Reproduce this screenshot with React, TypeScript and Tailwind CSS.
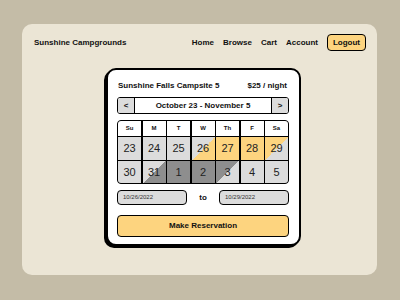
import React from "react";

type Cell = { n: string; cls: string };

const row1: Cell[] = [
  { n: "23", cls: "bg-[#dcdcdc]" },
  { n: "24", cls: "bg-[#dcdcdc]" },
  { n: "25", cls: "bg-[#dcdcdc]" },
  { n: "26", cls: "bg-[linear-gradient(to_bottom_right,#dcdcdc_50%,#fdd47f_50%)]" },
  { n: "27", cls: "bg-[#fdd47f]" },
  { n: "28", cls: "bg-[#fdd47f]" },
  { n: "29", cls: "bg-[linear-gradient(to_bottom_right,#fdd47f_50%,#dcdcdc_50%)]" },
];
const row2: Cell[] = [
  { n: "30", cls: "bg-[#dcdcdc]" },
  { n: "31", cls: "bg-[linear-gradient(to_bottom_right,#dcdcdc_50%,#8e8e8e_50%)]" },
  { n: "1", cls: "bg-[#8e8e8e]" },
  { n: "2", cls: "bg-[#8e8e8e]" },
  { n: "3", cls: "bg-[linear-gradient(to_bottom_right,#8e8e8e_50%,#dcdcdc_50%)]" },
  { n: "4", cls: "bg-[#dcdcdc]" },
  { n: "5", cls: "bg-[#dcdcdc]" },
];
const days = ["Su", "M", "T", "W", "Th", "F", "Sa"];

export default function App() {
  return (
    <div
      className="w-[400px] h-[300px] bg-[#c4bca7] pl-[22px] pt-[24px] text-[#111]"
      style={{ fontFamily: '"Liberation Sans", Arial, sans-serif' }}
    >
      <div className="w-[355px] h-[251px] rounded-[10px] bg-[#ebe5d5] pt-[10px] pl-[12px] pr-[11px]">
        <div className="flex items-center justify-between h-[17px]">
          <div className="text-[8px] font-bold">Sunshine Campgrounds</div>
          <div className="flex items-center gap-[9px] text-[8px] font-bold">
            <span>Home</span>
            <span>Browse</span>
            <span>Cart</span>
            <span>Account</span>
            <div className="w-[39px] h-[17px] rounded-[4px] border-[1.5px] border-black bg-[#fdd47f] flex items-center justify-center">
              Logout
            </div>
          </div>
        </div>

        <div className="ml-[72px] mt-[17px] w-[195px] h-[178px] rounded-[10px] border-2 border-black bg-white shadow-[-2px_2px_0_#000] pl-[9px] pr-[10px] pt-[10px]">
          <div className="flex items-center justify-between h-[11px] text-[8px] font-bold pl-px pr-[2px]">
            <span>Sunshine Falls Campsite 5</span>
            <span>$25 / night</span>
          </div>

          <div className="mt-[6px] h-[17px] flex rounded-[3px] border-[1.5px] border-black overflow-hidden text-[8px] font-bold">
            <div className="w-[17px] bg-[#dcdcdc] border-r-[1.5px] border-black flex items-center justify-center">&lt;</div>
            <div className="flex-1 bg-white flex items-center justify-center">October 23 - November 5</div>
            <div className="w-[17px] bg-[#dcdcdc] border-l-[1.5px] border-black flex items-center justify-center">&gt;</div>
          </div>

          <div className="mt-[6px] rounded-[4px] border-[1.5px] border-black bg-black overflow-hidden grid grid-cols-7 gap-[1.5px]">
            {days.map((d) => (
              <div key={d} className="h-[14.5px] bg-white flex items-center justify-center text-[6px] font-bold">
                {d}
              </div>
            ))}
            {row1.map((c) => (
              <div key={c.n} className={`h-[22.5px] flex items-center justify-center text-[11px] text-[#222] ${c.cls}`}>
                {c.n}
              </div>
            ))}
            {row2.map((c) => (
              <div key={c.n} className={`h-[22px] flex items-center justify-center text-[11px] text-[#222] ${c.cls}`}>
                {c.n}
              </div>
            ))}
          </div>

          <div className="mt-[6px] flex items-center justify-between">
            <div className="w-[70px] h-[15px] rounded-[4px] border-[1.5px] border-black bg-[#dcdcdc] flex items-center pl-[5px] text-[6px] text-[#333]">
              10/26/2022
            </div>
            <span className="text-[8px] font-bold">to</span>
            <div className="w-[70px] h-[15px] rounded-[4px] border-[1.5px] border-black bg-[#dcdcdc] flex items-center pl-[5px] text-[6px] text-[#333]">
              10/29/2022
            </div>
          </div>

          <div className="mt-[10px] h-[22px] rounded-[4px] border-[1.5px] border-black bg-[#fdd47f] flex items-center justify-center text-[8px] font-bold">
            Make Reservation
          </div>
        </div>
      </div>
    </div>
  );
}
